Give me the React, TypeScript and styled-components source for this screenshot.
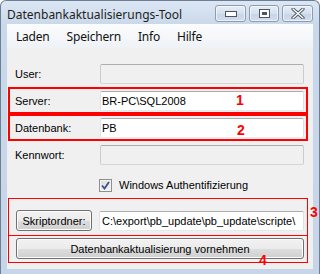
import styled, { createGlobalStyle } from "styled-components";

const GlobalStyle = createGlobalStyle`
  html, body {
    margin: 0;
    padding: 0;
    background: #ffffff;
  }
  * {
    box-sizing: border-box;
  }
`;

const Window = styled.div`
  width: 320px;
  height: 274px;
  display: flex;
  flex-direction: column;
  background: linear-gradient(#dce7f4, #c9d8ea 24px, #c6d5e8);
  border: 1px solid #6f7f93;
  border-bottom: none;
  border-radius: 6px 6px 0 0;
  padding: 0 6px 5px 6px;
  overflow: hidden;
`;

const TitleBar = styled.div`
  height: 23px;
  display: flex;
  align-items: center;
  justify-content: space-between;
`;

const Title = styled.span`
  font-family: "Noto Sans", "Open Sans", sans-serif;
  font-size: 12px;
  color: #1e1e1e;
  margin-top: 3px;
`;

const Controls = styled.div`
  display: flex;
  gap: 3px;
  margin-top: 2px;
  margin-right: 0;
`;

const CtrlButton = styled.div<{ $w: number }>`
  width: ${(p) => p.$w}px;
  height: 17px;
  border: 1px solid #8d9cb2;
  border-radius: 3px;
  background: linear-gradient(#e6eef8, #d5e0ee 50%, #c8d5e7 51%, #d2ddeb);
  box-shadow: inset 0 0 0 1px rgba(255, 255, 255, 0.6);
  display: flex;
  align-items: center;
  justify-content: center;
`;

const MenuBar = styled.div`
  height: 25px;
  display: flex;
  align-items: center;
  padding-left: 2px;
  background: linear-gradient(#fbfcfd, #f4f6f9 60%, #eef1f5);
`;

const MenuItem = styled.span`
  font-family: "Noto Sans", "Open Sans", sans-serif;
  font-size: 12px;
  letter-spacing: -0.2px;
  color: #111111;
  padding: 0 7px;
  margin-right: 3px;
`;

const Client = styled.div`
  flex: 1;
  background: #f0f0f0;
  padding: 11px 0 0 1px;
  display: flex;
  flex-direction: column;
`;

const Row = styled.div<{ $mark?: boolean }>`
  position: relative;
  width: 300px;
  display: grid;
  grid-template-columns: 85px 1fr;
  align-items: center;
  padding: 2px 2px 1px 5px;
  border: 2px solid ${(p) => (p.$mark ? "#ff0000" : "transparent")};
`;

const Label = styled.span`
  font-family: "Liberation Sans", Arial, sans-serif;
  font-size: 11px;
  color: #000000;
`;

const Field = styled.div<{ $disabled?: boolean }>`
  height: 20px;
  border: 1px solid;
  border-color: ${(p) =>
    p.$disabled ? "#adadad #cccccc #d6d6d6 #cccccc" : "#abadb3 #dbdfe6 #e3e9ef #e2e3ea"};
  border-radius: 2px;
  background: ${(p) => (p.$disabled ? "#f0f0f0" : "#ffffff")};
  font-family: "Liberation Sans", Arial, sans-serif;
  font-size: 11px;
  color: #000000;
  display: flex;
  align-items: center;
  padding-left: 1px;
  white-space: nowrap;
  overflow: hidden;
`;

const Badge = styled.span<{ $left: string; $top: number }>`
  position: absolute;
  left: ${(p) => p.$left};
  top: ${(p) => p.$top}px;
  font-family: "Liberation Sans", Arial, sans-serif;
  font-weight: bold;
  font-size: 14px;
  line-height: 14px;
  color: #ff0000;
`;

const CheckRow = styled.label`
  display: flex;
  align-items: center;
  gap: 7px;
  height: 20px;
  margin-top: 7px;
  padding-left: 91px;
  font-family: "Liberation Sans", Arial, sans-serif;
  font-size: 11px;
  color: #000000;
`;

const CheckBox = styled.span`
  width: 13px;
  height: 13px;
  border: 1px solid #8f8f8f;
  background: linear-gradient(135deg, #dcdcdc, #f5f5f5);
  box-shadow: inset 0 0 0 1px #f4f4f4;
  display: flex;
  align-items: center;
  justify-content: center;
`;

const Group = styled.div<{ $top?: boolean }>`
  position: relative;
  width: 300px;
  border: 1px solid #ff0000;
  border-top-width: ${(p) => (p.$top ? 1 : 0)}px;
  display: flex;
  align-items: center;
  gap: 7px;
`;

const ScriptGroup = styled(Group)`
  margin-top: 3px;
  padding: 11px 3px 4px 7px;
`;

const ActionGroup = styled(Group)`
  padding: 2px 3px 3px 7px;
`;

const Button = styled.button<{ $grow?: boolean }>`
  height: 21px;
  flex: ${(p) => (p.$grow ? 1 : "none")};
  width: ${(p) => (p.$grow ? "auto" : "76px")};
  border: 1px solid #707070;
  border-radius: 3px;
  background: linear-gradient(#f2f2f2, #ebebeb 50%, #dddddd 51%, #cfcfcf);
  box-shadow: inset 0 0 0 1px #fcfcfc;
  font-family: "Liberation Sans", Arial, sans-serif;
  font-size: 11px;
  color: #000000;
  padding: 0;
`;

const PathField = styled(Field)`
  flex: 1;
  padding-left: 2px;
`;

export default function App() {
  return (
    <>
      <GlobalStyle />
      <Window>
        <TitleBar>
          <Title>Datenbankaktualisierungs-Tool</Title>
          <Controls>
            <CtrlButton $w={31}>
              <svg width="12" height="6" viewBox="0 0 12 6">
                <rect x="0.5" y="0.5" width="11" height="5" fill="#ffffff" stroke="#4b5566" />
              </svg>
            </CtrlButton>
            <CtrlButton $w={30}>
              <svg width="11" height="9" viewBox="0 0 11 9">
                <rect x="0.5" y="0.5" width="10" height="8" fill="#ffffff" stroke="#4b5566" />
                <rect x="3" y="3" width="5" height="3" fill="#4b5566" />
              </svg>
            </CtrlButton>
            <CtrlButton $w={31}>
              <svg width="14" height="11" viewBox="0 0 14 11">
                <path
                  d="M2 1 L12 10 M12 1 L2 10"
                  stroke="#4b5566"
                  strokeWidth="3.2"
                  strokeLinecap="round"
                />
                <path
                  d="M2 1 L12 10 M12 1 L2 10"
                  stroke="#ffffff"
                  strokeWidth="1.3"
                  strokeLinecap="round"
                />
              </svg>
            </CtrlButton>
          </Controls>
        </TitleBar>
        <MenuBar>
          <MenuItem>Laden</MenuItem>
          <MenuItem>Speichern</MenuItem>
          <MenuItem>Info</MenuItem>
          <MenuItem>Hilfe</MenuItem>
        </MenuBar>
        <Client>
          <Row>
            <Label>User:</Label>
            <Field $disabled />
          </Row>
          <Row $mark>
            <Label>Server:</Label>
            <Field>BR-PC\SQL2008</Field>
            <Badge $left="226px" $top={4}>1</Badge>
          </Row>
          <Row $mark>
            <Label>Datenbank:</Label>
            <Field>PB</Field>
            <Badge $left="227px" $top={7}>2</Badge>
          </Row>
          <Row>
            <Label>Kennwort:</Label>
            <Field $disabled />
          </Row>
          <CheckRow>
            <CheckBox>
              <svg width="9" height="9" viewBox="0 0 9 9">
                <path d="M1 4.5 L3.5 7.5 L8 1" fill="none" stroke="#3e4f8a" strokeWidth="1.8" />
              </svg>
            </CheckBox>
            Windows Authentifizierung
          </CheckRow>
          <ScriptGroup $top>
            <Button>Skriptordner:</Button>
            <PathField>C:\export\pb_update\pb_update\scripte\</PathField>
            <Badge $left="calc(100% + 3px)" $top={6}>3</Badge>
          </ScriptGroup>
          <ActionGroup>
            <Button $grow>Datenbankaktualisierung vornehmen</Button>
            <Badge $left="250px" $top={17}>4</Badge>
          </ActionGroup>
        </Client>
      </Window>
    </>
  );
}
